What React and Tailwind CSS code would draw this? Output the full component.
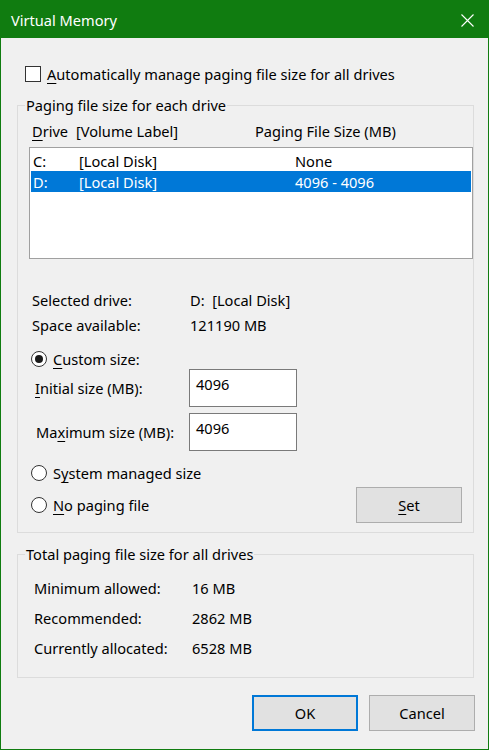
import React from "react";

const F = { fontFamily: '"Noto Sans", "Open Sans", sans-serif' };

function U({ children }) {
  return <span className="underline underline-offset-[3px] decoration-[1px]">{children}</span>;
}

function Radio({ checked }) {
  return (
    <span className="w-[16px] h-[16px] rounded-full border border-[#333333] bg-white flex items-center justify-center shrink-0">
      {checked && <span className="w-[8px] h-[8px] rounded-full bg-[#1a1a1a]" />}
    </span>
  );
}

function Btn({ children, primary, className = "" }) {
  return (
    <div
      className={
        "h-[36px] flex items-center justify-center bg-[#e1e1e1] text-black " +
        (primary ? "border-2 border-[#0078d7] " : "border border-[#adadad] ") +
        className
      }
    >
      {children}
    </div>
  );
}

export default function App() {
  return (
    <div
      className="w-[489px] h-[750px] border border-[#107c10] bg-[#f0f0f0] flex flex-col text-[14.6px] leading-[20px] text-black"
      style={F}
    >
      {/* Title bar */}
      <div className="h-[37px] bg-[#107c10] flex items-center justify-between pl-[10px] pr-[14px] text-white shrink-0">
        <span>Virtual Memory</span>
        <svg width="13" height="13" viewBox="0 0 13 13" className="mt-[1px]">
          <path d="M0.5 0.5 L12.5 12.5 M12.5 0.5 L0.5 12.5" stroke="white" strokeWidth="1.1" fill="none" />
        </svg>
      </div>

      <div className="px-[16px] flex flex-col">
        {/* checkbox */}
        <div className="mt-[26px] h-[20px] flex items-center pl-[8px]">
          <span className="w-[16px] h-[16px] border border-[#333333] bg-white shrink-0" />
          <span className="ml-[6px]"><U>A</U>utomatically manage paging file size for all drives</span>
        </div>

        {/* group 1 */}
        <fieldset className="mt-[11px] border border-[#dcdcdc] w-[457px] pb-[9px]">
          <legend className="ml-[7px] px-[1px]">Paging file size for each drive</legend>
          <div className="mt-[6px] flex h-[20px] pl-[14px]">
            <span className="w-[44px]"><U>D</U>rive</span>
            <span className="w-[179px]">[Volume Label]</span>
            <span>Paging File Size (MB)</span>
          </div>
          <div className="mt-[6px] ml-[11px] h-[112px] border border-[#a0a0a0] bg-white pt-[2px] px-[1px]">
            <div className="h-[21px] flex items-center pl-[2px]">
              <span className="w-[46px]">C:</span>
              <span className="w-[216px]">[Local Disk]</span>
              <span>None</span>
            </div>
            <div className="h-[21px] flex items-center pl-[2px] bg-[#0078d7] text-white">
              <span className="w-[46px]">D:</span>
              <span className="w-[216px]">[Local Disk]</span>
              <span>4096 - 4096</span>
            </div>
          </div>

          <div className="mt-[31px] pl-[14px] flex h-[20px]">
            <span className="w-[158px]">Selected drive:</span>
            <span>D:&nbsp; [Local Disk]</span>
          </div>
          <div className="mt-[5px] pl-[14px] flex h-[20px]">
            <span className="w-[158px]">Space available:</span>
            <span>121190 MB</span>
          </div>

          <div className="mt-[14px] pl-[13px] flex items-center h-[20px]">
            <Radio checked />
            <span className="ml-[6px]"><U>C</U>ustom size:</span>
          </div>

          <div className="flex items-center h-[38px]">
            <span className="w-[171px] pl-[17px]"><U>I</U>nitial size (MB):</span>
            <div className="w-[108px] h-[38px] border border-[#7a7a7a] bg-white pl-[6px] pt-[4px]">4096</div>
          </div>
          <div className="mt-[6px] flex items-center h-[38px]">
            <span className="w-[171px] pl-[18px]">Ma<U>x</U>imum size (MB):</span>
            <div className="w-[108px] h-[38px] border border-[#7a7a7a] bg-white pl-[6px] pt-[4px]">4096</div>
          </div>

          <div className="mt-[12px] pl-[13px] flex items-center h-[20px]">
            <Radio />
            <span className="ml-[6px]">S<U>y</U>stem managed size</span>
          </div>
          <div className="mt-[4px] flex items-center justify-between pr-[11px]">
            <div className="pl-[13px] flex items-center h-[20px]">
              <Radio />
              <span className="ml-[6px]"><U>N</U>o paging file</span>
            </div>
            <Btn className="w-[106px]"><U>S</U>et</Btn>
          </div>
        </fieldset>

        {/* group 2 */}
        <fieldset className="mt-[11px] border border-[#dcdcdc] w-[457px] h-[134px]">
          <legend className="ml-[7px] px-[1px]">Total paging file size for all drives</legend>
          <div className="mt-[14px] pl-[16px] flex flex-col gap-[10px]">
            <div className="flex h-[20px]"><span className="w-[158px]">Minimum allowed:</span><span>16 MB</span></div>
            <div className="flex h-[20px]"><span className="w-[158px]">Recommended:</span><span>2862 MB</span></div>
            <div className="flex h-[20px]"><span className="w-[158px]">Currently allocated:</span><span>6528 MB</span></div>
          </div>
        </fieldset>

        <div className="mt-[17px] flex justify-end gap-[11px] mr-[-3px]">
          <Btn primary className="w-[106px]">OK</Btn>
          <Btn className="w-[106px]">Cancel</Btn>
        </div>
      </div>
    </div>
  );
}
